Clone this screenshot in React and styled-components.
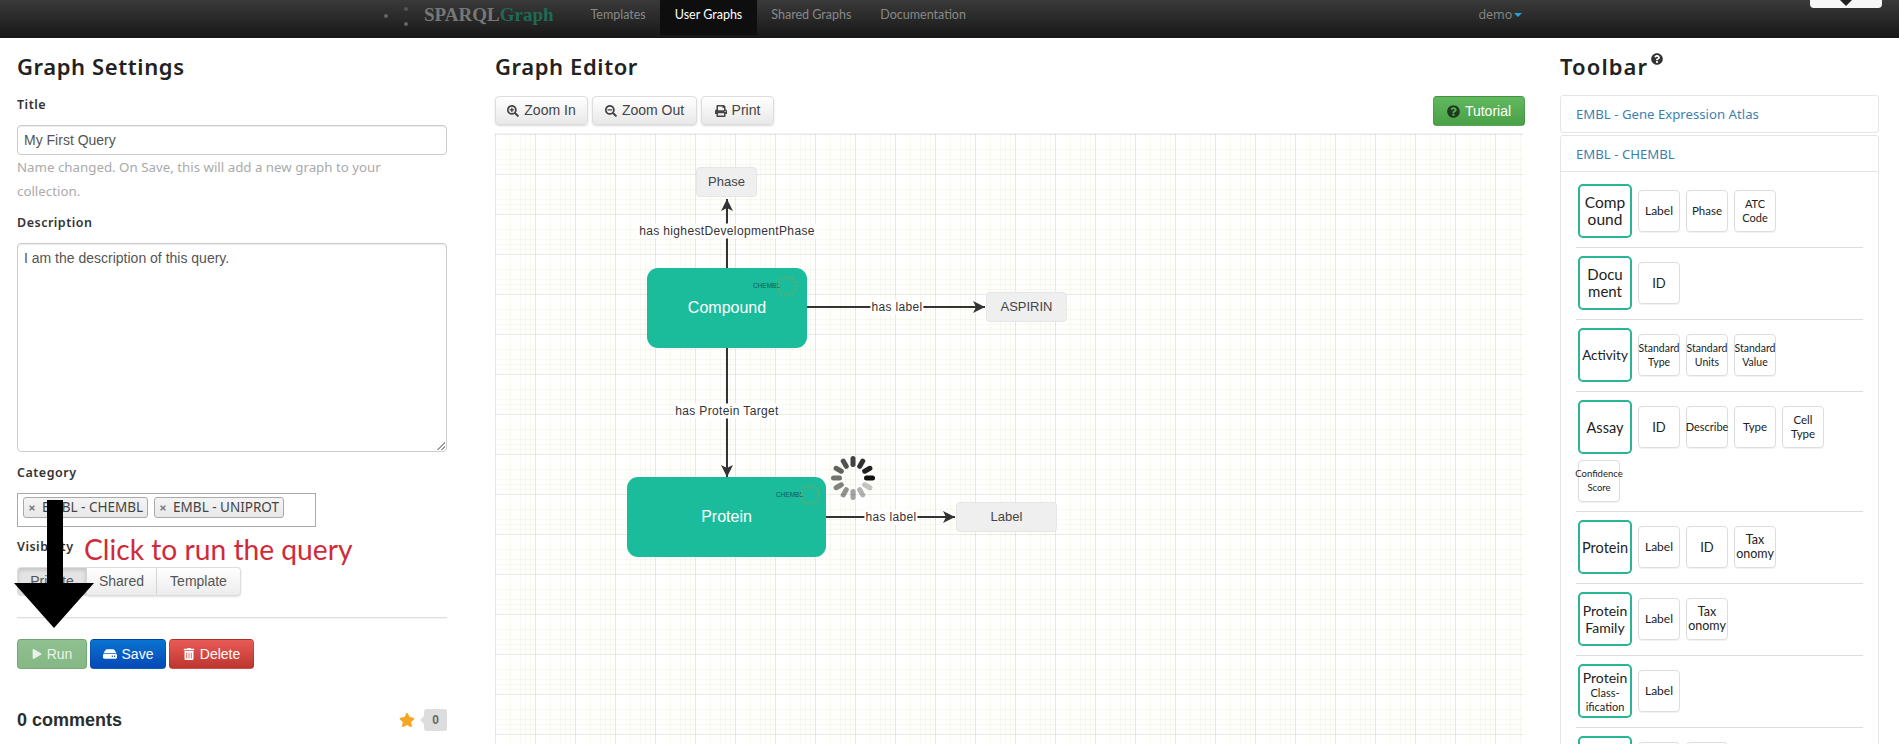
import styled, { createGlobalStyle } from "styled-components";
import { FaSearchPlus, FaSearchMinus, FaPrint, FaPlay, FaHdd, FaTrashAlt, FaStar, FaQuestionCircle, FaTimes } from "react-icons/fa";

const Global = createGlobalStyle`
  html, body { margin: 0; padding: 0; background: #fff; }
  body { font-family: "Liberation Sans", Arial, sans-serif; font-size: 14px; color: #333; }
`;

const HEAD_FONT = `"Noto Sans", "Open Sans", sans-serif`;
const ARIAL = `"Liberation Sans", Arial, sans-serif`;

const NAV = ["Templates", "User Graphs", "Shared Graphs", "Documentation"];

const GROUPS = [
  { main: ["Comp", "ound"], size: 15.5, items: [{ t: ["Label"], s: 12 }, { t: ["Phase"], s: 11.5 }, { t: ["ATC", "Code"], s: 11 }] },
  { main: ["Docu", "ment"], size: 15, items: [{ t: ["ID"], s: 13 }] },
  { main: ["Activity"], size: 13.5, items: [{ t: ["Standard", "Type"], s: 10.5 }, { t: ["Standard", "Units"], s: 10.5 }, { t: ["Standard", "Value"], s: 10.5 }] },
  { main: ["Assay"], size: 14.5, items: [{ t: ["ID"], s: 13 }, { t: ["Describe"], s: 11 }, { t: ["Type"], s: 11.5 }, { t: ["Cell", "Type"], s: 11.5 }, { t: ["Confidence", "Score"], s: 9.5 }] },
  { main: ["Protein"], size: 14.5, items: [{ t: ["Label"], s: 12 }, { t: ["ID"], s: 13 }, { t: ["Tax", "onomy"], s: 12.5 }] },
  { main: ["Protein", "Family"], size: 14, items: [{ t: ["Label"], s: 12 }, { t: ["Tax", "onomy"], s: 12.5 }] },
  { main: ["Protein", "Class-", "ification"], size: 14, small: true, items: [{ t: ["Label"], s: 12 }] },
  { main: [""], size: 14, items: [{ t: [""], s: 12 }, { t: [""], s: 12 }] },
];

const lines = (arr) => arr.map((l, i) => <span key={i}>{l}<br /></span>);

function ChemblBadge({ $right }) {
  const dots = Array.from({ length: 14 }, (_, i) => {
    const a = (i / 14) * Math.PI * 2;
    return <circle key={i} cx={11 + 9 * Math.cos(a)} cy={11 + 9 * Math.sin(a)} r="1.1" fill="#72a85c" />;
  });
  return (
    <Badge $right={$right}>
      <BadgeText>CHEMBL</BadgeText>
      <svg width="22" height="22" viewBox="0 0 22 22">{dots}</svg>
    </Badge>
  );
}

function Spinner() {
  const bars = Array.from({ length: 12 }, (_, i) => {
    // i = 0 is the black bar at 3 o'clock, going counter clockwise it fades
    const op = 1 - (i / 12) * 0.82;
    return <rect key={i} x="11" y="-2.5" width="11" height="5" rx="2.5" fill="#111" opacity={op} transform={`rotate(${-30 * i})`} />;
  });
  return (
    <SpinnerBox>
      <svg width="46" height="46" viewBox="-23 -23 46 46">{bars}</svg>
    </SpinnerBox>
  );
}

function Edges() {
  return (
    <EdgeSvg width="1028" height="610">
      <defs>
        <marker id="tip" markerWidth="14" markerHeight="14" refX="12" refY="6" orient="auto" markerUnits="userSpaceOnUse">
          <path d="M0 0 L12 6 L0 12 L3 6 Z" fill="#333" />
        </marker>
      </defs>
      <g stroke="#333" strokeWidth="2" fill="none">
        <line x1="232" y1="134" x2="232" y2="65" markerEnd="url(#tip)" />
        <line x1="312" y1="173" x2="490" y2="173" markerEnd="url(#tip)" />
        <line x1="232" y1="214" x2="232" y2="343" markerEnd="url(#tip)" />
        <line x1="331" y1="383" x2="460" y2="383" markerEnd="url(#tip)" />
      </g>
    </EdgeSvg>
  );
}

export default function App() {
  return (
    <Page>
      <Global />
      <Header>
        <LogoDots width="30" height="30" viewBox="0 0 30 30">
          <circle cx="4" cy="16" r="2" fill="#666" />
          <circle cx="24" cy="9" r="2" fill="#555" />
          <circle cx="24" cy="16" r="1.2" fill="#333" />
          <circle cx="24" cy="24" r="2" fill="#666" />
        </LogoDots>
        <Logo>SPARQL<LogoAccent>Graph</LogoAccent></Logo>
        <Nav>
          {NAV.map((n) => (
            <NavItem key={n} $active={n === "User Graphs"}>{n}</NavItem>
          ))}
        </Nav>
        <User>demo<Caret /></User>
        <Dropper><DropArrow /></Dropper>
      </Header>

      <Columns>
        <Left>
          <Heading>Graph Settings</Heading>
          <Label>Title</Label>
          <TextInput>My First Query</TextInput>
          <Help>Name changed. On Save, this will add a new graph to your collection.</Help>
          <Label $top={10}>Description</Label>
          <TextArea>I am the description of this query.<Grip /></TextArea>
          <Label $top={11}>Category</Label>
          <TagBox>
            <Tag><FaTimes size={8} color="#777" />EMBL - CHEMBL</Tag>
            <Tag><FaTimes size={8} color="#777" />EMBL - UNIPROT</Tag>
          </TagBox>
          <Label $top={10}>Visibility</Label>
          <Group>
            <GroupBtn $w={70} $active>Private</GroupBtn>
            <GroupBtn $w={70}>Shared</GroupBtn>
            <GroupBtn $w={84}>Template</GroupBtn>
          </Group>
          <Rule />
          <Actions>
            <ActionBtn $w={70} $from="#8fc08f" $to="#86b886" $dim><FaPlay size={10} />Run</ActionBtn>
            <ActionBtn $w={76} $from="#0a74d0" $to="#0448b8"><FaHdd size={14} />Save</ActionBtn>
            <ActionBtn $w={85} $from="#ea5a56" $to="#bd362f"><FaTrashAlt size={12} />Delete</ActionBtn>
          </Actions>
          <Comments>
            <CommentCount>0 comments</CommentCount>
            <FaStar size={16} color="#f5a623" />
            <Count>0</Count>
          </Comments>
          <Annotation>Click to run the query</Annotation>
          <BigArrow width="80" height="128" viewBox="0 0 80 128">
            <path d="M33 0 H49 V83 H80 L40 128 L0 83 H33 Z" fill="#000" />
          </BigArrow>
        </Left>

        <Middle>
          <Heading>Graph Editor</Heading>
          <EditorBar>
            <EditorBtn $w={93}><FaSearchPlus size={12} />Zoom In</EditorBtn>
            <EditorBtn $w={105}><FaSearchMinus size={12} />Zoom Out</EditorBtn>
            <EditorBtn $w={73}><FaPrint size={12} />Print</EditorBtn>
            <Tutorial><FaQuestionCircle size={13} color="#1f3a1f" />Tutorial</Tutorial>
          </EditorBar>
          <Canvas>
            <Edges />
            <EdgeLabel $x={232} $y={97}>has highestDevelopmentPhase</EdgeLabel>
            <EdgeLabel $x={402} $y={173}>has label</EdgeLabel>
            <EdgeLabel $x={232} $y={277}>has Protein Target</EdgeLabel>
            <EdgeLabel $x={396} $y={383}>has label</EdgeLabel>
            <PropNode $x={201} $y={33} $w={61}>Phase</PropNode>
            <ClassNode $x={152} $y={134} $w={160}>Compound<ChemblBadge $right={9} /></ClassNode>
            <PropNode $x={491} $y={158} $w={81}>ASPIRIN</PropNode>
            <ClassNode $x={132} $y={343} $w={199}>Protein<ChemblBadge $right={5} /></ClassNode>
            <PropNode $x={461} $y={368} $w={101}>Label</PropNode>
            <Spinner />
          </Canvas>
        </Middle>

        <Right>
          <ToolbarHeading>Toolbar<HelpMark><FaQuestionCircle size={12} color="#333" /></HelpMark></ToolbarHeading>
          <Panel>
            <PanelHead>EMBL - Gene Expression Atlas</PanelHead>
          </Panel>
          <Panel>
            <PanelHead $open>EMBL - CHEMBL</PanelHead>
            <PanelBody>
              {GROUPS.map((g, i) => (
                <Row key={i}>
                  <MainItem $size={g.size} $small={g.small}>{lines(g.main)}</MainItem>
                  {g.items.map((it, j) => (
                    <SmallItem key={j} $size={it.s}>{lines(it.t)}</SmallItem>
                  ))}
                </Row>
              ))}
            </PanelBody>
          </Panel>
        </Right>
      </Columns>
    </Page>
  );
}

const Page = styled.div`
  height: 744px;
  overflow: hidden;
  position: relative;
`;

const Header = styled.header`
  height: 38px;
  display: flex;
  align-items: stretch;
  padding-left: 382px;
  background: linear-gradient(#3a3a3a, #171717);
  position: relative;
`;

const LogoDots = styled.svg`
  margin-right: 12px;
  flex: none;
`;

const Logo = styled.div`
  width: 152px;
  font: bold 19px/29px "Liberation Serif", serif;
  color: #777;
  flex: none;
`;

const LogoAccent = styled.span`
  color: #1f6a55;
`;

const Nav = styled.nav`
  display: flex;
  height: 35px;
`;

const NavItem = styled.a`
  padding: 0 14.5px;
  font: 12.5px/29px Lato, sans-serif;
  color: ${(p) => (p.$active ? "#fff" : "#888")};
  background: ${(p) => (p.$active ? "#0e0e0e" : "transparent")};
`;

const User = styled.div`
  margin-left: 498px;
  font: 12.5px/29px "Open Sans", sans-serif;
  color: #888;
  display: flex;
  align-items: center;
  height: 29px;
  gap: 2px;
`;

const Caret = styled.i`
  border: 4px solid transparent;
  border-top-color: #2d9fd8;
  border-bottom: 0;
`;

const Dropper = styled.div`
  position: absolute;
  left: 1810px;
  top: 0;
  width: 72px;
  height: 8px;
  background: #f7f7f7;
  border-radius: 0 0 4px 4px;
  display: flex;
  justify-content: center;
`;

const DropArrow = styled.i`
  border: 6px solid transparent;
  border-top-color: #222;
  border-bottom: 0;
`;

const Columns = styled.div`
  display: grid;
  grid-template-columns: 430px 1028px 319px;
  column-gap: 48px;
  padding: 13px 0 0 17px;
`;

const Left = styled.section`
  position: relative;
`;

const Middle = styled.section``;

const Right = styled.section`
  margin: 0 11px 0 -11px;
`;

const Heading = styled.h2`
  margin: 0;
  height: 30px;
  font: 600 22px/30px ${HEAD_FONT};
  letter-spacing: 0.6px;
  color: #222;
  white-space: nowrap;
`;

const ToolbarHeading = styled(Heading)`
  letter-spacing: 1.1px;
`;

const Label = styled.div`
  margin-top: ${(p) => p.$top ?? 14}px;
  margin-bottom: 10px;
  height: 20px;
  font: 600 12.5px/20px ${HEAD_FONT};
  letter-spacing: 0.5px;
  color: #333;
`;

const TextInput = styled.div`
  height: 30px;
  box-sizing: border-box;
  border: 1px solid #ccc;
  border-radius: 4px;
  padding: 0 6px;
  font: 14px/28px ${ARIAL};
  color: #555;
  box-shadow: inset 0 1px 1px rgba(0, 0, 0, 0.075);
`;

const Help = styled.p`
  margin: 0;
  font: 13.3px/24px ${HEAD_FONT};
  color: #aaa;
  width: 400px;
`;

const TextArea = styled.div`
  height: 209px;
  box-sizing: border-box;
  border: 1px solid #ccc;
  border-radius: 4px;
  padding: 4px 6px;
  font: 14px/20px ${ARIAL};
  color: #555;
  position: relative;
  box-shadow: inset 0 1px 1px rgba(0, 0, 0, 0.075);
`;

const Grip = styled.i`
  position: absolute;
  right: 1px;
  bottom: 1px;
  width: 8px;
  height: 8px;
  background: linear-gradient(135deg, transparent 50%, #999 50%, #999 60%, transparent 60%, transparent 75%, #999 75%, #999 85%, transparent 85%);
`;

const TagBox = styled.div`
  width: 299px;
  height: 34px;
  box-sizing: border-box;
  border: 1px solid #aaa;
  padding: 3px 5px;
  display: flex;
  gap: 6px;
`;

const Tag = styled.div`
  height: 21px;
  box-sizing: border-box;
  border: 1px solid #aaa;
  border-radius: 3px;
  background: linear-gradient(#f4f4f4, #e8e8e8);
  padding: 0 4px;
  display: flex;
  align-items: center;
  gap: 6px;
  font: 13.5px/19px ${HEAD_FONT};
  color: #444;
  white-space: nowrap;
`;

const Group = styled.div`
  display: flex;
`;

const GroupBtn = styled.div`
  width: ${(p) => p.$w}px;
  height: 29px;
  box-sizing: border-box;
  border: 1px solid #ddd;
  border-left-width: ${(p) => (p.$active ? 1 : 0)}px;
  text-align: center;
  font: 14px/27px ${ARIAL};
  color: #555;
  background: ${(p) => (p.$active ? "#e4e4e4" : "linear-gradient(#fff, #ececec)")};
  box-shadow: ${(p) => (p.$active ? "inset 0 2px 4px rgba(0,0,0,.15)" : "0 1px 2px rgba(0,0,0,.12)")};
  &:first-child { border-radius: 4px 0 0 4px; }
  &:last-child { border-radius: 0 4px 4px 0; }
`;

const Rule = styled.hr`
  margin: 21px 0 20px;
  border: 0;
  border-top: 1px solid #ddd;
  border-bottom: 1px solid #f6f6f6;
`;

const Actions = styled.div`
  display: flex;
  gap: 3px;
`;

const ActionBtn = styled.div`
  width: ${(p) => p.$w}px;
  height: 30px;
  box-sizing: border-box;
  border-radius: 4px;
  border: 1px solid rgba(0, 0, 0, 0.12);
  background: linear-gradient(${(p) => p.$from}, ${(p) => p.$to});
  color: ${(p) => (p.$dim ? "#e8f2e8" : "#fff")};
  font: 14px/28px ${ARIAL};
  display: flex;
  align-items: center;
  justify-content: center;
  gap: 5px;
`;

const Comments = styled.div`
  margin-top: 40px;
  display: flex;
  align-items: center;
  height: 22px;
  gap: 9px;
`;

const CommentCount = styled.div`
  font: bold 18px/22px ${ARIAL};
  color: #2a2e2e;
  margin-right: auto;
`;

const Count = styled.div`
  width: 23px;
  height: 22px;
  background: #ddd;
  border-radius: 3px;
  text-align: center;
  font: bold 12px/22px ${ARIAL};
  color: #666;
  position: relative;
  &::before {
    content: "";
    position: absolute;
    left: -4px;
    top: 7px;
    border: 4px solid transparent;
    border-left: 0;
    border-right-color: #ddd;
  }
`;

const Annotation = styled.div`
  position: absolute;
  left: 67px;
  top: 479px;
  font: 28.2px/38px Lato, sans-serif;
  color: #d02a38;
  white-space: nowrap;
`;

const BigArrow = styled.svg`
  position: absolute;
  left: -3px;
  top: 449px;
`;

const EditorBar = styled.div`
  display: flex;
  gap: 4px;
  margin-top: 15px;
  height: 29px;
`;

const EditorBtn = styled.div`
  width: ${(p) => p.$w}px;
  height: 29px;
  box-sizing: border-box;
  border: 1px solid #ddd;
  border-radius: 4px;
  background: linear-gradient(#fff, #e8e8e8);
  box-shadow: 0 1px 2px rgba(0, 0, 0, 0.15);
  display: flex;
  align-items: center;
  justify-content: center;
  gap: 5px;
  font: 14px/27px ${ARIAL};
  color: #444;
`;

const Tutorial = styled.div`
  margin-left: auto;
  margin-right: -2px;
  width: 92px;
  height: 30px;
  box-sizing: border-box;
  border-radius: 4px;
  border: 1px solid rgba(0, 0, 0, 0.1);
  background: linear-gradient(#62b85f, #4aa047);
  color: #fff;
  display: flex;
  align-items: center;
  justify-content: center;
  gap: 5px;
  font: 14px/28px ${ARIAL};
`;

const gridStops = () => {
  // one 40px cell: white start, a pale band with thin lines, a grey major line at the end
  const band = "rgba(235, 235, 190, 0.04)";
  const line = "rgba(190, 190, 150, 0.1)";
  return [
    `transparent 0 10px`,
    `${band} 10px 14px`, `${line} 14px 15px`,
    `${band} 15px 24px`, `${line} 24px 25px`,
    `${band} 25px 29px`, `${line} 29px 30px`,
    `${band} 30px 34px`, `${line} 34px 35px`,
    `${band} 35px 39px`,
    `rgba(0, 0, 0, 0.085) 39px 40px`,
  ].join(", ");
};

const Canvas = styled.div`
  position: relative;
  margin-top: 8px;
  height: 610px;
  border-top: 1px solid #f2f2f2;
  background-color: #fff;
  background-image:
    linear-gradient(90deg, ${gridStops()}),
    linear-gradient(180deg, ${gridStops()});
  background-size: 40px 40px;
  background-position: 1px 0, 0 1px;
`;

const EdgeSvg = styled.svg`
  position: absolute;
  left: 0;
  top: 0;
`;

const EdgeLabel = styled.div`
  position: absolute;
  left: ${(p) => p.$x}px;
  top: ${(p) => p.$y}px;
  transform: translate(-50%, -50%);
  background: #fff;
  padding: 0 1px;
  font: 12px/15px ${ARIAL};
  letter-spacing: 0.35px;
  color: #333;
  white-space: nowrap;
`;

const PropNode = styled.div`
  position: absolute;
  left: ${(p) => p.$x}px;
  top: ${(p) => p.$y}px;
  width: ${(p) => p.$w}px;
  height: 30px;
  box-sizing: border-box;
  border: 1px solid #e6e6e6;
  border-radius: 4px;
  background: #efefef;
  text-align: center;
  font: 13px/28px ${ARIAL};
  color: #444;
`;

const ClassNode = styled.div`
  position: absolute;
  left: ${(p) => p.$x}px;
  top: ${(p) => p.$y}px;
  width: ${(p) => p.$w}px;
  height: 80px;
  border-radius: 11px;
  background: #1abc9c;
  text-align: center;
  font: 16px/80px ${ARIAL};
  color: #fff;
`;

const Badge = styled.div`
  position: absolute;
  top: 7px;
  right: ${(p) => p.$right}px;
  display: flex;
  align-items: center;
  line-height: 1;
`;

const BadgeText = styled.span`
  font: 6.5px/8px ${ARIAL};
  color: #0f5a5a;
  margin-right: -4px;
`;

const SpinnerBox = styled.div`
  position: absolute;
  left: 335px;
  top: 321px;
  width: 46px;
  height: 46px;
`;

const HelpMark = styled.span`
  position: relative;
  top: -10px;
  left: 3px;
`;

const Panel = styled.div`
  margin-top: 2px;
  border: 1px solid #e5e5e5;
  border-radius: 3px;
  &:nth-of-type(1) { margin-top: 14px; }
`;

const PanelHead = styled.div`
  height: 36px;
  box-sizing: border-box;
  padding-left: 15px;
  font: 13.2px/36px ${HEAD_FONT};
  color: #3f7fb0;
  border-bottom: ${(p) => (p.$open ? "1px solid #e5e5e5" : "0")};
`;

const PanelBody = styled.div`
  padding: 12px 15px 0;
`;

const Row = styled.div`
  display: flex;
  flex-wrap: wrap;
  align-items: flex-start;
  column-gap: 6px;
  padding: 0 2px 9px;
  margin-bottom: 8px;
  border-bottom: 1px solid #ddd;
`;

const MainItem = styled.div`
  width: 54px;
  height: 54px;
  box-sizing: border-box;
  border: 2px solid #2bb594;
  border-radius: 5px;
  display: flex;
  flex-direction: column;
  align-items: center;
  justify-content: center;
  text-align: center;
  font: ${(p) => p.$size}px/17px Lato, sans-serif;
  color: #222;
  white-space: nowrap;
  span:nth-child(n + 2) { font-size: ${(p) => (p.$small ? 11 : p.$size)}px; line-height: ${(p) => (p.$small ? 14 : 17)}px; }
`;

const SmallItem = styled.div`
  margin-top: 6px;
  width: 42px;
  height: 42px;
  box-sizing: border-box;
  border: 1px solid #ddd;
  border-radius: 4px;
  box-shadow: 0 1px 1px rgba(0, 0, 0, 0.06);
  display: flex;
  flex-direction: column;
  align-items: center;
  justify-content: center;
  text-align: center;
  font: ${(p) => p.$size}px/14px Lato, sans-serif;
  color: #222;
  white-space: nowrap;
`;
